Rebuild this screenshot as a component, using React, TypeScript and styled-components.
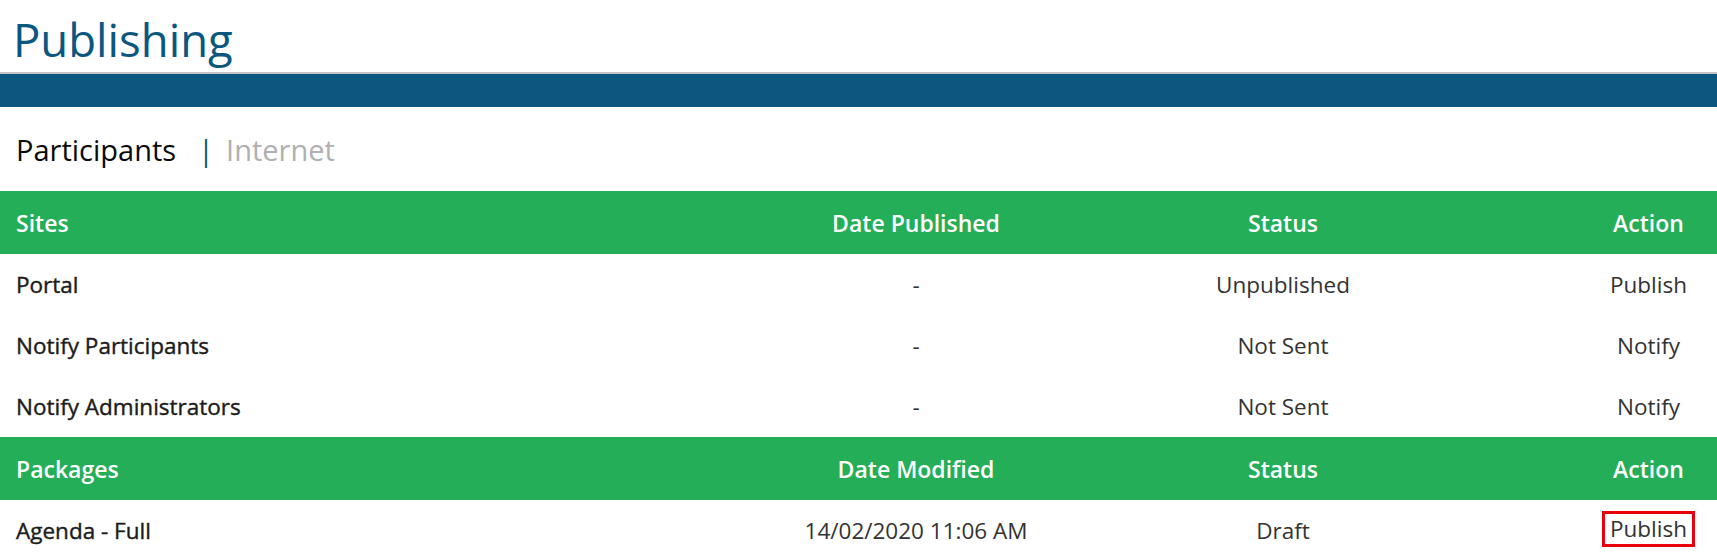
import React from "react";
import styled, { createGlobalStyle } from "styled-components";

const GlobalStyle = createGlobalStyle`
  html, body {
    margin: 0;
    padding: 0;
    background: #ffffff;
  }
  body {
    font-family: "Open Sans", "Noto Sans", "Liberation Sans", sans-serif;
    color: #333333;
  }
`;

const Page = styled.div`
  width: 1717px;
  display: flex;
  flex-direction: column;
`;

const Title = styled.h1`
  margin: 0;
  padding: 9px 0 2px 13px;
  font-size: 45.5px;
  line-height: 61px;
  font-weight: 400;
  color: #0b5780;
  border-bottom: 2px solid #c4c4c4;
`;

const Band = styled.div`
  height: 33px;
  background: #0b5780;
`;

const Tabs = styled.nav`
  height: 84px;
  display: flex;
  align-items: center;
  padding-left: 16px;
  font-size: 29px;
`;

const Tab = styled.span<{ $active?: boolean }>`
  color: ${(p) => (p.$active ? "#0a0a0a" : "#b0b0b0")};
  cursor: pointer;
`;

const Separator = styled.span`
  color: #0b5780;
  margin: 0 12px 0 22px;
`;

const Table = styled.div`
  display: flex;
  flex-direction: column;
`;

const Row = styled.div<{ $head?: boolean }>`
  display: grid;
  grid-template-columns: minmax(0, 1fr) 140px 594px 137px;
  height: ${(p) => (p.$head ? "63px" : "61px")};
  background: ${(p) => (p.$head ? "#23ae57" : "#ffffff")};
  color: ${(p) => (p.$head ? "#ffffff" : "#333333")};
  font-size: ${(p) => (p.$head ? "23px" : "22.5px")};
  font-weight: ${(p) => (p.$head ? 600 : 400)};
`;

const Cell = styled.div<{ $first?: boolean }>`
  display: flex;
  align-items: center;
  justify-content: ${(p) => (p.$first ? "flex-start" : "center")};
  padding-left: ${(p) => (p.$first ? "16px" : "0")};
  white-space: nowrap;
`;

const NameText = styled.span<{ $head?: boolean }>`
  color: ${(p) => (p.$head ? "#ffffff" : "#1c1c1c")};
  -webkit-text-stroke: ${(p) => (p.$head ? "0" : "0.4px")};
`;

const HighlightBox = styled.span`
  display: inline-block;
  border: 3px solid #e8000b;
  padding: 0 5px;
  line-height: 30px;
  margin-top: -4px;
`;

type Data = {
  name: string;
  date: string;
  status: string;
  action: string;
  highlight?: boolean;
};

const sites: Data[] = [
  { name: "Portal", date: "-", status: "Unpublished", action: "Publish" },
  { name: "Notify Participants", date: "-", status: "Not Sent", action: "Notify" },
  { name: "Notify Administrators", date: "-", status: "Not Sent", action: "Notify" },
];

const packages: Data[] = [
  {
    name: "Agenda - Full",
    date: "14/02/2020 11:06 AM",
    status: "Draft",
    action: "Publish",
    highlight: true,
  },
];

const Section: React.FC<{ heads: string[]; rows: Data[] }> = ({ heads, rows }) => (
  <>
    <Row $head>
      <Cell $first>
        <NameText $head>{heads[0]}</NameText>
      </Cell>
      <Cell>{heads[1]}</Cell>
      <Cell>{heads[2]}</Cell>
      <Cell>{heads[3]}</Cell>
    </Row>
    {rows.map((r) => (
      <Row key={r.name}>
        <Cell $first>
          <NameText>{r.name}</NameText>
        </Cell>
        <Cell>{r.date}</Cell>
        <Cell>{r.status}</Cell>
        <Cell>{r.highlight ? <HighlightBox>{r.action}</HighlightBox> : r.action}</Cell>
      </Row>
    ))}
  </>
);

export default function App() {
  return (
    <Page>
      <GlobalStyle />
      <Title>Publishing</Title>
      <Band />
      <Tabs>
        <Tab $active>Participants</Tab>
        <Separator>|</Separator>
        <Tab>Internet</Tab>
      </Tabs>
      <Table>
        <Section heads={["Sites", "Date Published", "Status", "Action"]} rows={sites} />
        <Section heads={["Packages", "Date Modified", "Status", "Action"]} rows={packages} />
      </Table>
    </Page>
  );
}
